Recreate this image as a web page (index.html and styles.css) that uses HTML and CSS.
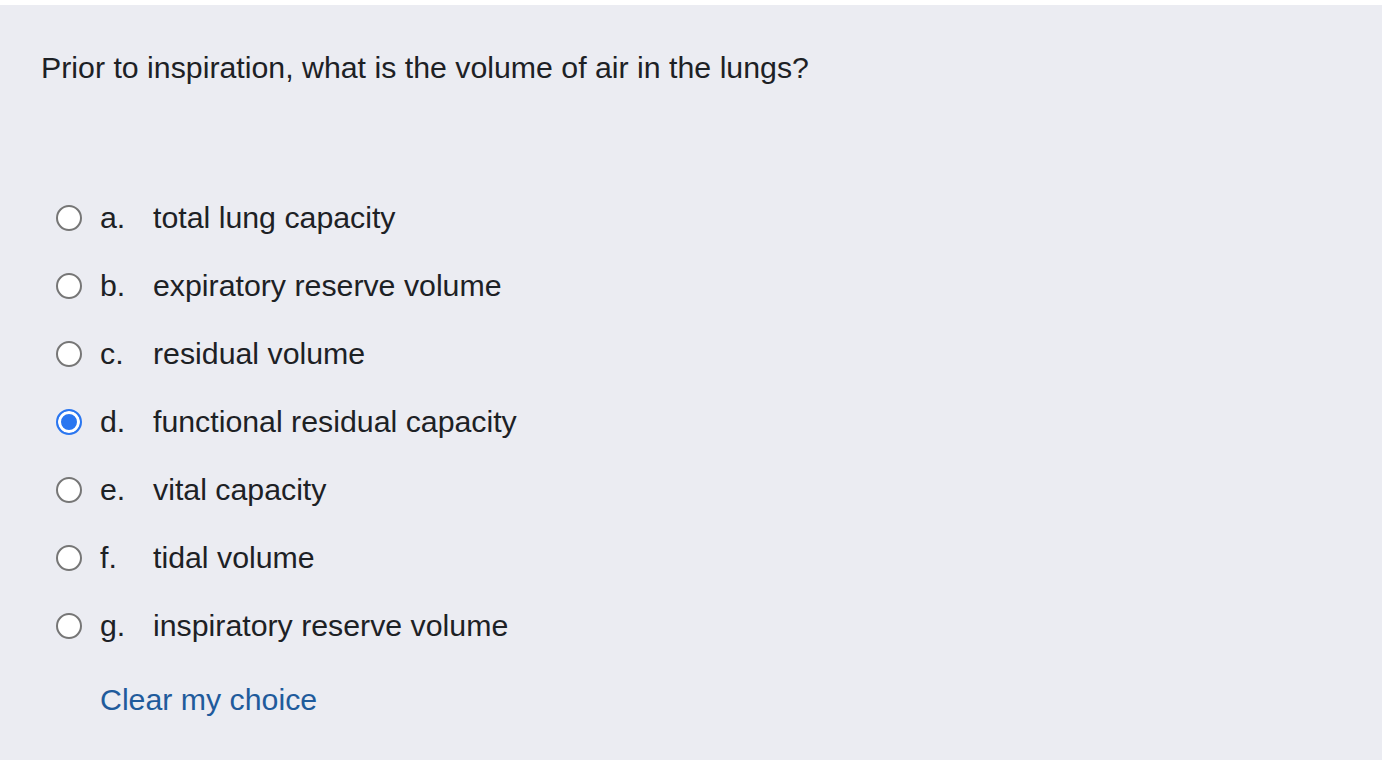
FILE: index.html
```html
<!DOCTYPE html>
<html>
<head>
<meta charset="utf-8">
<link rel="stylesheet" href="styles.css">
</head>
<body>
<div class="panel">
  <div class="qtext">Prior to inspiration, what is the volume of air in the lungs?</div>
  <div class="answers">
    <div class="opt"><span class="radio"></span><span class="lbl">a.</span><span class="txt">total lung capacity</span></div>
    <div class="opt"><span class="radio"></span><span class="lbl">b.</span><span class="txt">expiratory reserve volume</span></div>
    <div class="opt"><span class="radio"></span><span class="lbl">c.</span><span class="txt">residual volume</span></div>
    <div class="opt"><span class="radio checked"></span><span class="lbl">d.</span><span class="txt">functional residual capacity</span></div>
    <div class="opt"><span class="radio"></span><span class="lbl">e.</span><span class="txt">vital capacity</span></div>
    <div class="opt"><span class="radio"></span><span class="lbl">f.</span><span class="txt">tidal volume</span></div>
    <div class="opt"><span class="radio"></span><span class="lbl">g.</span><span class="txt">inspiratory reserve volume</span></div>
  </div>
  <a class="clear" href="#">Clear my choice</a>
</div>
</body>
</html>
```
FILE: styles.css
```css
html, body { margin: 0; padding: 0; background: #ffffff; }
body { padding: 5px 0 8px 0; font-family: "Liberation Sans", Arial, sans-serif; color: #1d2125; }
.panel {
  background: #ebecf2;
  height: 755px;
  box-sizing: border-box;
  padding: 46px 0 0 41px;
}
.qtext { font-size: 30.3px; line-height: 34px; }
.answers { margin-top: 116px; display: flex; flex-direction: column; gap: 34px; }
.opt { display: flex; align-items: center; height: 34px; font-size: 30.3px; }
.radio {
  width: 22px; height: 22px; border-radius: 50%;
  border: 2px solid #767676; background: #fff;
  margin-left: 15px; margin-right: 18px; flex: none;
}
.radio.checked {
  border-color: #2a76f0;
  background: #2a76f0;
  box-shadow: inset 0 0 0 3px #fff;
}
.lbl { width: 53px; }
.clear {
  display: inline-block; margin-left: 59px; margin-top: 40px;
  font-size: 30.3px; color: #1f5b9c; text-decoration: none; line-height: 34px;
}
```
